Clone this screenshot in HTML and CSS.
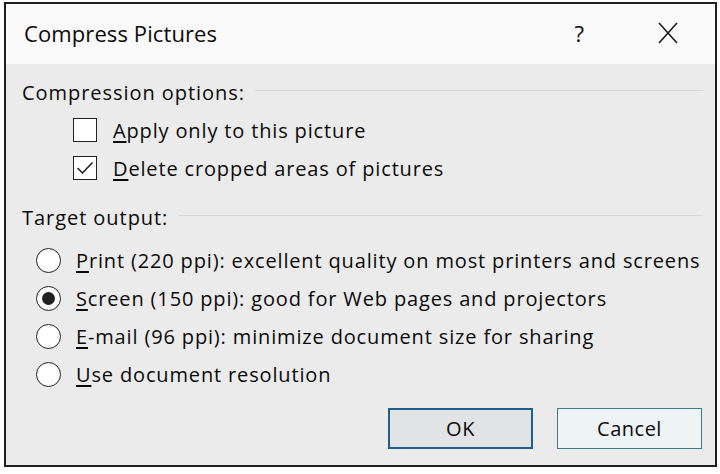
FILE: index.html
```html
<!DOCTYPE html>
<html>
<head>
<meta charset="utf-8">
<link rel="stylesheet" href="styles.css">
</head>
<body>
<div class="dialog">
  <div class="titlebar">
    <span class="title">Compress Pictures</span>
    <span class="help">?</span>
    <svg class="close" width="20" height="22" viewBox="0 0 20 22"><path d="M1 1 L19 21 M19 1 L1 21" stroke="#1a1a1a" stroke-width="1.6" fill="none"/></svg>
  </div>
  <div class="content">
    <div class="group">
      <div class="header">Compression options:</div>
      <div class="row check-row">
        <span class="checkbox"></span>
        <span class="label"><u>A</u>pply only to this picture</span>
      </div>
      <div class="row check-row">
        <span class="checkbox"><svg width="18" height="14" viewBox="0 0 18 14"><path d="M1.5 7 L6.5 12 L16.5 1.5" stroke="#1a1a1a" stroke-width="1.5" fill="none"/></svg></span>
        <span class="label"><u>D</u>elete cropped areas of pictures</span>
      </div>
    </div>
    <div class="group group2">
      <div class="header">Target output:</div>
      <div class="radios">
        <div class="row radio-row">
          <span class="radio"></span>
          <span class="label"><u>P</u>rint (220 ppi): excellent quality on most printers and screens</span>
        </div>
        <div class="row radio-row">
          <span class="radio checked"></span>
          <span class="label"><u>S</u>creen (150 ppi): good for Web pages and projectors</span>
        </div>
        <div class="row radio-row">
          <span class="radio"></span>
          <span class="label"><u>E</u>-mail (96 ppi): minimize document size for sharing</span>
        </div>
        <div class="row radio-row">
          <span class="radio"></span>
          <span class="label"><u>U</u>se document resolution</span>
        </div>
      </div>
    </div>
    <div class="buttons">
      <button class="btn btn-ok">OK</button>
      <button class="btn btn-cancel">Cancel</button>
    </div>
  </div>
</div>
</body>
</html>
```
FILE: styles.css
```css
html, body {
  margin: 0;
  padding: 0;
  background: #ffffff;
}
body {
  font-family: "Open Sans", "Noto Sans", sans-serif;
  color: #0a0a0a;
  padding: 2px 3px 0 4px;
}
.dialog {
  width: 713px;
  height: 465px;
  border: 2px solid #1f1f1f;
  display: flex;
  flex-direction: column;
  box-sizing: border-box;
  background: #ebebeb;
}
.titlebar {
  height: 60px;
  background: #fafafa;
  display: flex;
  align-items: center;
  padding: 0 0 2px 18px;
  box-sizing: border-box;
}
.title {
  font-size: 22px;
  flex: 1;
  letter-spacing: 0.1px;
}
.help {
  font-size: 22px;
  margin-right: 74px;
}
.close {
  margin-right: 37px;
}
.content {
  flex: 1;
  padding: 9px 12px 0 16px;
  display: flex;
  flex-direction: column;
}
.header {
  height: 38px;
  display: flex;
  align-items: center;
  font-size: 20px;
  letter-spacing: 0.95px;
}
.header::after {
  content: "";
  flex: 1;
  border-top: 1px solid #d6d6d6;
  margin: -3px 0 0 10px;
}
.row {
  height: 38px;
  display: flex;
  align-items: center;
  font-size: 20px;
  letter-spacing: 0.85px;
}
.label u {
  text-decoration-thickness: 2px;
  text-underline-offset: 3px;
}
.check-row {
  padding-left: 51px;
}
.checkbox {
  width: 24px;
  height: 24px;
  border: 1.5px solid #222;
  box-sizing: border-box;
  background: #fff;
  margin-right: 16px;
  display: flex;
  align-items: center;
  justify-content: center;
}
.group2 {
  margin-top: 11px;
}
.radios {
  margin-top: 5px;
}
.radio-row {
  padding-left: 14px;
}
.radio {
  width: 25px;
  height: 25px;
  border: 1.5px solid #222;
  border-radius: 50%;
  box-sizing: border-box;
  background: #fff;
  margin-right: 15px;
  display: flex;
  align-items: center;
  justify-content: center;
}
.radio.checked::after {
  content: "";
  width: 13px;
  height: 13px;
  border-radius: 50%;
  background: #222;
}
.buttons {
  margin-top: 15px;
  display: flex;
  justify-content: flex-end;
  gap: 24px;
  padding-right: 1px;
}
.btn {
  width: 145px;
  height: 41px;
  font-family: "Open Sans", "Noto Sans", sans-serif;
  font-size: 20px;
  letter-spacing: 0.5px;
  color: #0a0a0a;
  box-sizing: border-box;
  padding: 0;
}
.btn-ok {
  background: #e1e3e4;
  border: 2px solid #1e5f8e;
}
.btn-cancel {
  background: #eef3f5;
  border: 1.5px solid #3b7b8c;
}
```
